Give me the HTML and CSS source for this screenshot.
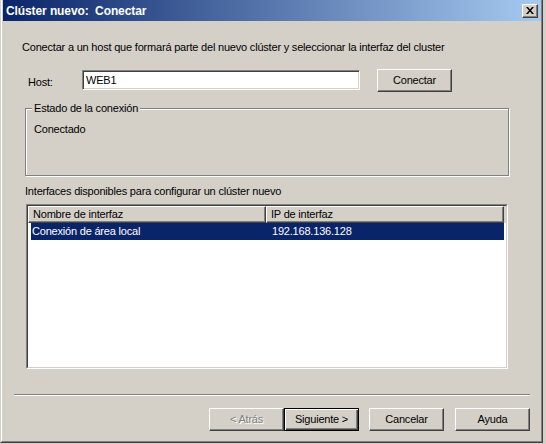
FILE: index.html
```html
<!DOCTYPE html>
<html lang="es">
<head>
<meta charset="utf-8">
<title>Clúster nuevo: Conectar</title>
<link rel="stylesheet" href="styles.css">
</head>
<body>
<div class="dialog">
  <div class="frame">
    <div class="titlebar">
      <span class="title">Clúster nuevo:  Conectar</span>
      <div class="close">
        <svg width="8" height="7" viewBox="0 0 8 7"><path d="M0 0h2l2 2.5L6 0h2L5 3.5 8 7H6L4 4.5 2 7H0l3-3.5z" fill="#000"/></svg>
      </div>
    </div>
    <p class="intro">Conectar a un host que formará parte del nuevo clúster y seleccionar la interfaz del cluster</p>
    <div class="host-row">
      <span class="host-label">Host:</span>
      <div class="input">WEB1</div>
      <div class="btn connect">Conectar</div>
    </div>
    <div class="group">
      <span class="legend">Estado de la conexión</span>
      <div class="status">Conectado</div>
    </div>
    <p class="list-label">Interfaces disponibles para configurar un clúster nuevo</p>
    <div class="listview">
      <div class="lv-inner">
        <div class="lv-header">
          <div class="lv-col c1">Nombre de interfaz</div>
          <div class="lv-col c2">IP de interfaz</div>
        </div>
        <div class="lv-row selected">
          <span class="cell name">Conexión de área local</span>
          <span class="cell ip">192.168.136.128</span>
        </div>
      </div>
    </div>
    <div class="sep"></div>
    <div class="actions">
      <div class="btn disabled">&lt; Atrás</div>
      <div class="btn default">Siguiente &gt;</div>
      <div class="btn cancel">Cancelar</div>
      <div class="btn help">Ayuda</div>
    </div>
  </div>
</div>
</body>
</html>
```
FILE: styles.css
```css
html, body {
  margin: 0;
  padding: 0;
}
body {
  background: #d4d0c8;
  font-family: "Liberation Sans", Arial, sans-serif;
  font-size: 11px;
  line-height: 13px;
  letter-spacing: -0.2px;
  color: #000;
  width: 546px;
  height: 444px;
  overflow: hidden;
}
.dialog {
  width: 543px;
  height: 443px;
  box-sizing: border-box;
  border-left: 1px solid #d4d0c8;
  border-right: 1px solid #404040;
  border-bottom: 1px solid #404040;
}
.frame {
  height: 100%;
  box-sizing: border-box;
  border-left: 1px solid #fff;
  border-right: 1px solid #808080;
  border-bottom: 1px solid #808080;
  padding-left: 1px;
  display: flex;
  flex-direction: column;
}
.titlebar {
  height: 21px;
  flex: none;
  display: flex;
  align-items: flex-start;
  background: linear-gradient(to right, #0a246a, #a6caf0);
  color: #fff;
  font-weight: bold;
  font-size: 12px;
  letter-spacing: -0.1px;
}
.title {
  white-space: pre;
  margin: 4px 0 0 3px;
  line-height: 14px;
}
.close {
  margin: 4px 3px 0 auto;
  width: 16px;
  height: 14px;
  box-sizing: border-box;
  background: #d4d0c8;
  border: 1px solid;
  border-color: #fff #404040 #404040 #fff;
  box-shadow: inset -1px -1px #808080;
  display: flex;
  align-items: center;
  justify-content: center;
  padding: 0 1px 1px 0;
}
.close svg {
  display: block;
}
.intro {
  margin: 20px 0 0 19px;
  white-space: nowrap;
}
.host-row {
  display: flex;
  align-items: flex-start;
  margin-top: 15px;
  height: 23px;
}
.host-label {
  width: 54px;
  margin: 7px 0 0 25px;
}
.input {
  width: 278px;
  height: 20px;
  margin-top: 1px;
  box-sizing: border-box;
  background: #fff;
  border: 1px solid;
  border-color: #808080 #fff #fff #808080;
  box-shadow: inset 1px 1px #404040, inset -1px -1px #d4d0c8;
  padding: 3px 0 0 3px;
}
.btn {
  width: 75px;
  height: 23px;
  flex: none;
  box-sizing: border-box;
  background: #d4d0c8;
  border: 1px solid;
  border-color: #fff #404040 #404040 #fff;
  box-shadow: inset -1px -1px #808080;
  display: flex;
  align-items: center;
  justify-content: center;
  padding-bottom: 1px;
}
.connect {
  margin-left: 17px;
}
.group {
  margin: 16px 0 0 22px;
  width: 484px;
  height: 68px;
  box-sizing: border-box;
  border: 1px solid #808080;
  box-shadow: 1px 1px 0 #fff, inset 1px 1px 0 #fff;
}
.legend {
  display: block;
  width: fit-content;
  margin: -7px 0 0 6px;
  padding: 0 2px;
  background: #d4d0c8;
}
.status {
  margin: 8px 0 0 8px;
}
.list-label {
  margin: 9px 0 0 22px;
}
.listview {
  margin: 6px 0 0 23px;
  width: 482px;
  height: 165px;
  flex: none;
  box-sizing: border-box;
  border: 1px solid;
  border-color: #808080 #fff #fff #808080;
  background: #fff;
}
.lv-inner {
  height: 100%;
  box-sizing: border-box;
  border: 1px solid;
  border-color: #404040 #d4d0c8 #d4d0c8 #404040;
}
.lv-header {
  display: flex;
  height: 17px;
  background: #d4d0c8;
}
.lv-col {
  box-sizing: border-box;
  height: 17px;
  border: 1px solid;
  border-color: #fff #404040 #404040 #fff;
  box-shadow: inset -1px -1px #808080;
  padding: 1px 0 0 4px;
  white-space: nowrap;
}
.c1 {
  width: 238px;
}
.c2 {
  width: 238px;
}
.lv-row {
  display: flex;
  margin-left: 3px;
  width: 473px;
  height: 17px;
  align-items: center;
}
.selected {
  background: #0a246a;
  color: #fff;
}
.cell.name {
  width: 241px;
  padding-left: 1px;
  box-sizing: border-box;
}
.sep {
  margin: 25px 0 0 11px;
  width: 516px;
  height: 0;
  border-top: 1px solid #808080;
  border-bottom: 1px solid #fff;
}
.actions {
  display: flex;
  margin-top: 12px;
  padding-left: 206px;
}
.disabled {
  color: #808080;
  text-shadow: 1px 1px 0 #fff;
}
.default {
  border: 1px solid #000;
  box-shadow: inset 1px 1px #fff, inset -1px -1px #404040, inset -2px -2px #808080;
}
.cancel {
  margin-left: 10px;
}
.help {
  margin-left: 11px;
}
```
